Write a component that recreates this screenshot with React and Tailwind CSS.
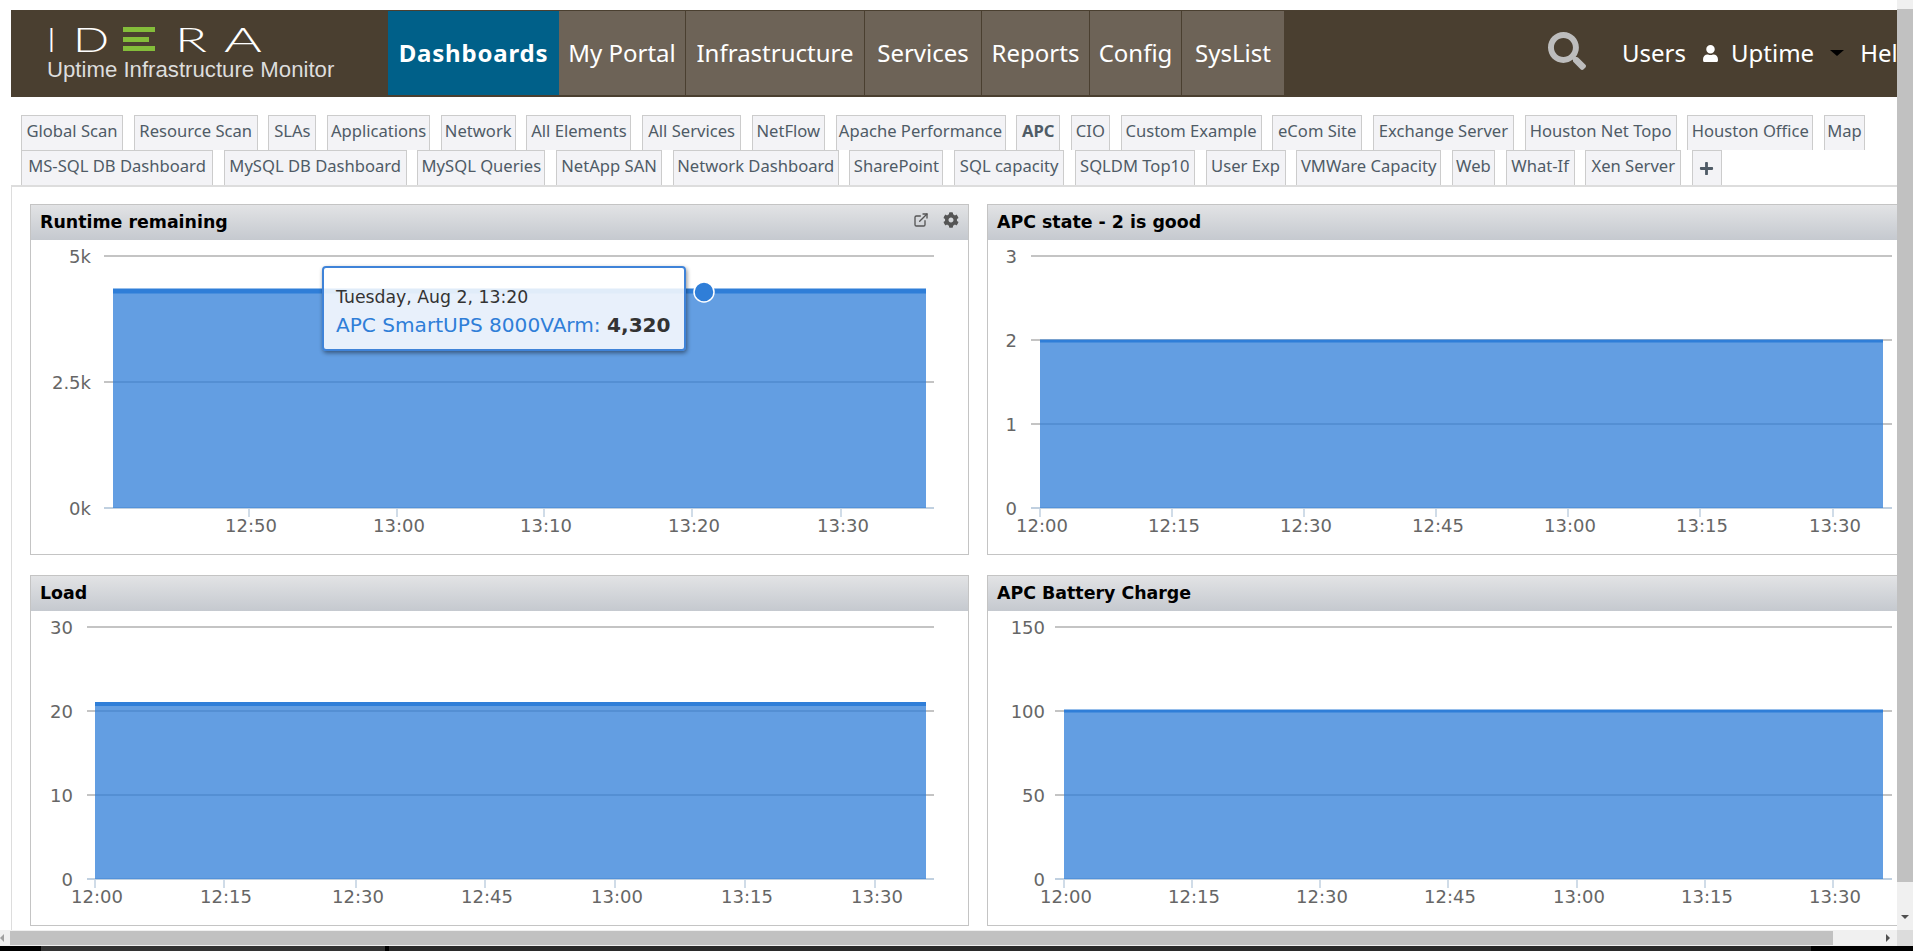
import { ExternalLink } from 'lucide-react';
import { FaCog, FaPlus, FaSearch, FaUser } from 'react-icons/fa';

const NAV = [
    { label: 'My Portal', w: 'w-[127px]' },
    { label: 'Infrastructure', w: 'w-[179px]' },
    { label: 'Services', w: 'w-[117px]' },
    { label: 'Reports', w: 'w-[108px]' },
    { label: 'Config', w: 'w-[92px]' },
    { label: 'SysList', w: 'w-[103px]' },
];

const TABS_1 = [
    { label: 'Global Scan', w: 'w-[102px]' },
    { label: 'Resource Scan', w: 'w-[124px]' },
    { label: 'SLAs', w: 'w-[48px]' },
    { label: 'Applications', w: 'w-[103px]' },
    { label: 'Network', w: 'w-[75px]' },
    { label: 'All Elements', w: 'w-[105px]' },
    { label: 'All Services', w: 'w-[99px]' },
    { label: 'NetFlow', w: 'w-[73px]' },
    { label: 'Apache Performance', w: 'w-[170px]' },
    { label: 'APC', w: 'w-[44px]', active: true },
    { label: 'CIO', w: 'w-[39px]' },
    { label: 'Custom Example', w: 'w-[141px]' },
    { label: 'eCom Site', w: 'w-[90px]' },
    { label: 'Exchange Server', w: 'w-[141px]' },
    { label: 'Houston Net Topo', w: 'w-[152px]' },
    { label: 'Houston Office', w: 'w-[126px]' },
    { label: 'Map', w: 'w-[41px]' },
];

const TABS_2 = [
    { label: 'MS-SQL DB Dashboard', w: 'w-[192px]' },
    { label: 'MySQL DB Dashboard', w: 'w-[183px]' },
    { label: 'MySQL Queries', w: 'w-[128px]' },
    { label: 'NetApp SAN', w: 'w-[106px]' },
    { label: 'Network Dashboard', w: 'w-[166px]' },
    { label: 'SharePoint', w: 'w-[94px]' },
    { label: 'SQL capacity', w: 'w-[110px]' },
    { label: 'SQLDM Top10', w: 'w-[120px]' },
    { label: 'User Exp', w: 'w-[80px]' },
    { label: 'VMWare Capacity', w: 'w-[145px]' },
    { label: 'Web', w: 'w-[43px]' },
    { label: 'What-If', w: 'w-[69px]' },
    { label: 'Xen Server', w: 'w-[96px]' },
];

const TIMES = ['12:00', '12:15', '12:30', '12:45', '13:00', '13:15', '13:30'];

const CHARTS = [
    {
        title: 'Runtime remaining',
        icons: true,
        grid: [73, 903],
        area: [82, 895],
        lineY: 51,
        lineW: 5,
        labelRight: 60,
        yLabels: ['5k', '2.5k', '0k'],
        ticks: [218, 366, 513, 661, 810],
        tickLabels: ['12:50', '13:00', '13:10', '13:20', '13:30'],
        marker: [673, 52],
    },
    {
        title: 'APC state - 2 is good',
        grid: [43, 904],
        area: [52, 895],
        lineY: 101,
        lineW: 3,
        labelRight: 29,
        yLabels: ['3', '2', '1', '0'],
        ticks: [52, 184, 316, 448, 580, 712, 845],
        tickLabels: TIMES,
    },
    {
        title: 'Load',
        grid: [56, 903],
        area: [64, 895],
        lineY: 93,
        lineW: 4,
        labelRight: 42,
        yLabels: ['30', '20', '10', '0'],
        ticks: [64, 193, 325, 454, 584, 714, 844],
        tickLabels: TIMES,
    },
    {
        title: 'APC Battery Charge',
        grid: [67, 904],
        area: [76, 895],
        lineY: 100,
        lineW: 3,
        labelRight: 57,
        yLabels: ['150', '100', '50', '0'],
        ticks: [76, 204, 332, 460, 589, 717, 845],
        tickLabels: TIMES,
    },
];

const TOP = 16;
const BOTTOM = 268;

function Chart({ chart }) {
    const step = (BOTTOM - TOP) / (chart.yLabels.length - 1);
    return (
        <svg width="938" height="314" className="block font-['DejaVu_Sans',sans-serif]">
            {chart.yLabels.map((label, i) => {
                const y = TOP + step * i;
                const isAxis = i === chart.yLabels.length - 1;
                return (
                    <g key={label}>
                        <line
                            x1={chart.grid[0]}
                            x2={chart.grid[1]}
                            y1={y}
                            y2={y}
                            stroke={isAxis ? '#c0d0e0' : '#c4c4c4'}
                            strokeWidth="2"
                        />
                        <text x={chart.labelRight} y={y + 7} textAnchor="end" className="fill-[#666] text-[18px]">
                            {label}
                        </text>
                    </g>
                );
            })}
            <rect
                x={chart.area[0]}
                y={chart.lineY}
                width={chart.area[1] - chart.area[0]}
                height={BOTTOM - chart.lineY}
                fill="#2f7ed8"
                fillOpacity="0.75"
            />
            <line
                x1={chart.area[0]}
                x2={chart.area[1]}
                y1={chart.lineY}
                y2={chart.lineY}
                stroke="#2f7ed8"
                strokeWidth={chart.lineW}
            />
            {chart.ticks.map((x, i) => (
                <g key={x}>
                    <line x1={x} x2={x} y1={BOTTOM} y2={BOTTOM + 9} stroke="#c0d0e0" strokeWidth="1.5" />
                    <text x={x + 2} y={BOTTOM + 24} textAnchor="middle" className="fill-[#666] text-[18px]">
                        {chart.tickLabels[i]}
                    </text>
                </g>
            ))}
            {chart.marker && (
                <circle cx={chart.marker[0]} cy={chart.marker[1]} r="10" fill="#2f7ed8" stroke="#fff" strokeWidth="1.5" />
            )}
        </svg>
    );
}

function Panel({ chart }) {
    return (
        <div className="relative h-[351px] border border-[#c4c4c4] bg-white">
            <div className="flex h-[35px] items-center justify-between bg-gradient-to-b from-[#e2e3e5] to-[#c5c9cf] pl-[9px] pr-[9px]">
                <span className="font-['DejaVu_Sans',sans-serif] text-[17.4px] font-bold text-black">{chart.title}</span>
                {chart.icons && (
                    <div className="mb-[6px] flex items-center gap-[14px] text-[#555]">
                        <ExternalLink size={16} strokeWidth={2} />
                        <FaCog size={16} />
                    </div>
                )}
            </div>
            <Chart chart={chart} />
            {chart.marker && (
                <div className="absolute left-[291px] top-[61px] h-[85px] w-[364px] rounded-[4px] border-2 border-[#3f83d8] bg-white/85 pl-[12px] pt-[18px] font-['DejaVu_Sans',sans-serif] shadow-[1px_2px_4px_rgba(0,0,0,0.45)]">
                    <div className="text-[17.3px] leading-[22px] text-[#333]">Tuesday, Aug 2, 13:20</div>
                    <div className="mt-[4px] whitespace-nowrap text-[20.1px] leading-[26px] text-[#2f7ed8]">
                        APC SmartUPS 8000VArm: <b className="text-[#333]">4,320</b>
                    </div>
                </div>
            )}
        </div>
    );
}

function Tab({ tab }) {
    return (
        <div
            className={`${tab.w} flex h-[35px] items-center justify-center whitespace-nowrap border border-b-0 border-[#ccc] bg-[#f3f3f6] pb-[4px] font-['Noto_Sans',sans-serif] text-[16.6px] text-[#4f5b66] ${tab.active ? 'font-bold' : ''}`}
        >
            {tab.label}
        </div>
    );
}

function Header() {
    return (
        <div className="flex h-[87px] items-start overflow-hidden bg-[#4a3f30]">
            <div className="w-[377px] shrink-0 pl-[36px] pt-[17px]">
                <div className="flex h-[24px] items-center font-['Lato',sans-serif] text-[34px] font-light leading-none text-white">
                    <span className="w-[26px]">I</span>
                    <span className="inline-block w-[50px] origin-left scale-x-[1.4]">D</span>
                    <div className="flex h-[24px] w-[32px] flex-col justify-between">
                        <div className="h-[5px] bg-[#84bd3a]" />
                        <div className="h-[5px] w-[26px] bg-[#84bd3a]" />
                        <div className="h-[5px] bg-[#84bd3a]" />
                    </div>
                    <span className="ml-[20px] inline-block w-[49px] origin-left scale-x-[1.55]">R</span>
                    <span className="inline-block origin-left scale-x-[1.7]">A</span>
                </div>
                <div className="mt-[7px] whitespace-nowrap font-['Liberation_Sans',sans-serif] text-[22.2px] leading-[24px] text-[#ddd]">
                    Uptime Infrastructure Monitor
                </div>
            </div>
            <div className="mt-px flex h-[84px] w-[171px] shrink-0 items-center justify-center bg-[#006089] font-['Noto_Sans',sans-serif] text-[24px] font-bold tracking-[0.8px] text-white">
                Dashboards
            </div>
            {NAV.map((item) => (
                <div
                    key={item.label}
                    className={`${item.w} mt-px flex h-[84px] shrink-0 items-center justify-center border-r border-[#4a3f30] bg-[#6d6357] font-['Noto_Sans',sans-serif] text-[24px] text-white`}
                >
                    {item.label}
                </div>
            ))}
            <div className="ml-[263px] mt-[22px] flex h-[38px] shrink-0 items-center font-['Noto_Sans',sans-serif] text-[24px] text-white">
                <FaSearch size={38} className="text-[#bdbdbd]" />
                <span className="ml-[36px] pt-[4px]">Users</span>
                <FaUser size={17} className="ml-[16px] mt-[4px]" />
                <span className="ml-[12px] pt-[4px]">Uptime</span>
                <div className="ml-[16px] mt-[4px] h-0 w-0 border-x-[7px] border-t-[6px] border-x-transparent border-t-black" />
                <span className="ml-[16px] pt-[4px]">Help</span>
            </div>
        </div>
    );
}

export default function App() {
    return (
        <div className="flex h-screen w-screen flex-col overflow-hidden bg-white">
            <div className="flex min-h-0 flex-1">
                <div className="min-w-0 flex-1 overflow-hidden pl-[11px] pt-[10px]">
                    <Header />
                    <div className="mt-[18px] pl-[10px]">
                        <div className="flex h-[35px] gap-x-[10.7px]">
                            {TABS_1.map((tab) => (
                                <Tab key={tab.label} tab={tab} />
                            ))}
                        </div>
                        <div className="flex h-[35px] gap-x-[10.7px]">
                            {TABS_2.map((tab) => (
                                <Tab key={tab.label} tab={tab} />
                            ))}
                            <div className="flex h-[35px] w-[30px] items-center justify-center border border-b-0 border-[#ccc] bg-[#f3f3f6] text-[#4f5b66]">
                                <FaPlus size={15} />
                            </div>
                        </div>
                    </div>
                    <div className="h-full border-l border-t-2 border-[#ddd] pl-[18px] pt-[17px]">
                        <div className="grid w-[1897px] grid-cols-[939px_940px] gap-x-[18px] gap-y-[20px]">
                            {CHARTS.map((chart) => (
                                <Panel key={chart.title} chart={chart} />
                            ))}
                        </div>
                    </div>
                </div>
                <div className="flex w-[16px] shrink-0 flex-col bg-[#f0f0f0]">
                    <div className="mt-[9px] h-[873px] bg-[#c1c1c1]" />
                    <div className="mt-[33px] flex justify-center">
                        <div className="h-0 w-0 border-x-[4px] border-t-[4px] border-x-transparent border-t-[#505050]" />
                    </div>
                </div>
            </div>
            <div className="flex h-[16px] shrink-0 items-center bg-[#f0f0f0]">
                <div className="flex w-[10px] justify-start">
                    <div className="h-0 w-0 border-y-[4px] border-r-[4px] border-y-transparent border-r-[#a0a0a0]" />
                </div>
                <div className="h-[14px] w-[1823px] bg-[#c1c1c1]" />
                <div className="ml-[53px] h-0 w-0 border-y-[4px] border-l-[4px] border-y-transparent border-l-[#505050]" />
                <div className="ml-auto h-[16px] w-[16px] bg-[#dcdcdc]" />
            </div>
            <div className="flex h-[5px] shrink-0 bg-black">
                <div className="ml-[41px] w-[344px] bg-[#333]" />
                <div className="ml-[4px] w-[1422px] bg-[#2a2a2a]" />
            </div>
        </div>
    );
}
